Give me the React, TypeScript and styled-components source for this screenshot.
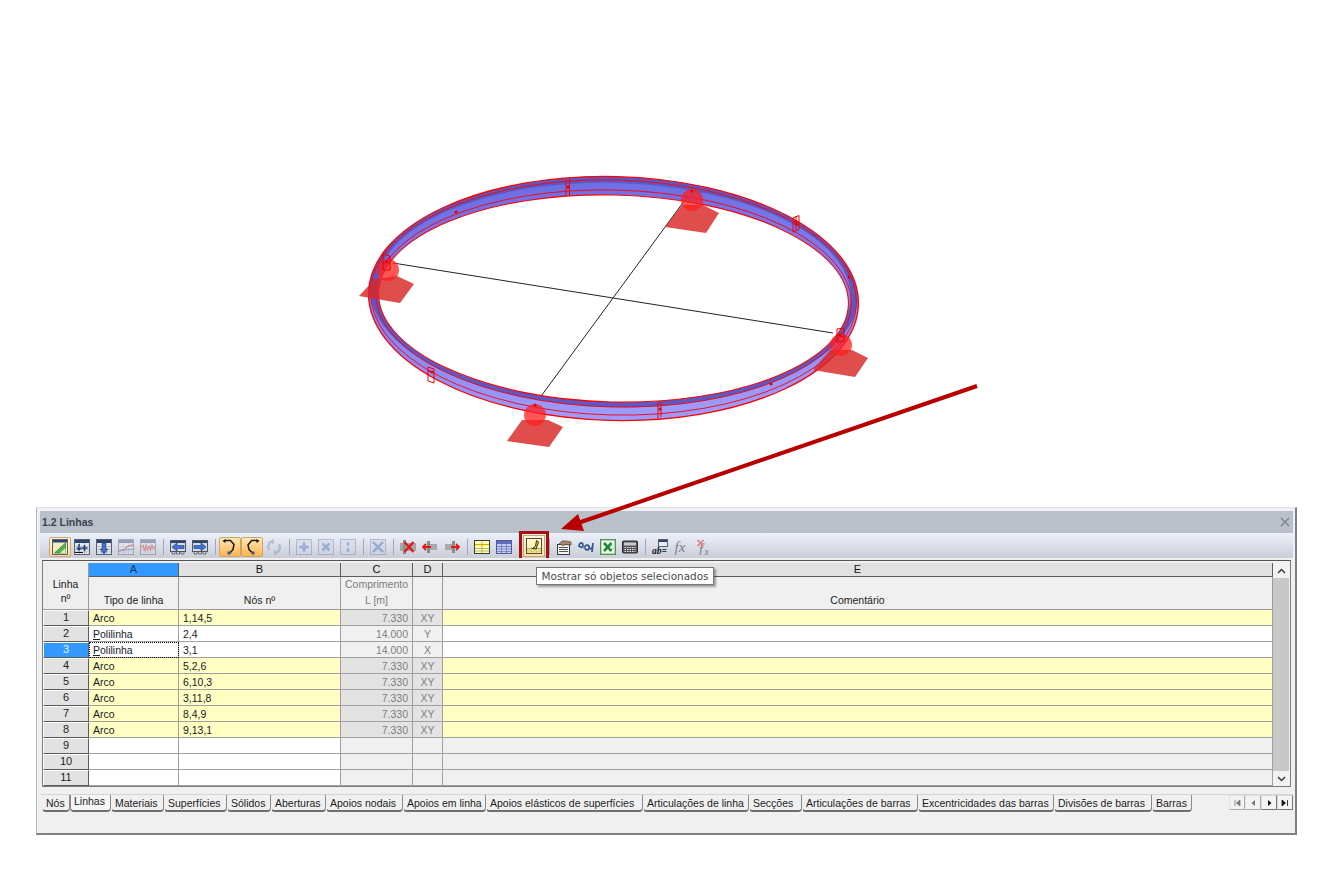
import React from 'react';
import styled, { createGlobalStyle } from 'styled-components';

const GlobalStyle = createGlobalStyle`
  html, body {
    margin: 0;
    padding: 0;
    background: #fff;
  }
  body {
    font-family: "Liberation Sans", Arial, sans-serif;
    font-size: 10.5px;
    color: #1a1a1a;
  }
`;

const Page = styled.div`
  position: relative;
  width: 1343px;
  height: 883px;
  overflow: hidden;
`;

const Scene = styled.svg`
  display: block;
  width: 1343px;
  height: 507px;
`;

const Overlay = styled.svg`
  position: absolute;
  left: 0;
  top: 0;
  width: 1343px;
  height: 883px;
  pointer-events: none;
`;

const Tip = styled.div`
  position: absolute;
  left: 536px;
  top: 567px;
  width: 178px;
  height: 18px;
  box-sizing: border-box;
  border: 1px solid #767676;
  background: #fff;
  box-shadow: 2px 2px 2px rgba(0, 0, 0, 0.35);
  font-family: "DejaVu Sans", sans-serif;
  font-size: 10.4px;
  line-height: 16px;
  text-align: center;
  color: #4a4a4a;
  white-space: nowrap;
`;

const Window = styled.div`
  box-sizing: border-box;
  width: 1261px;
  height: 328px;
  margin-left: 36px;
  padding: 3px 2px 0 3px;
  background: #eef0f3;
  border-top: 1px solid #e2e2e2;
  border-left: 1px solid #b4b8bc;
  border-right: 2px solid #7d8186;
  border-bottom: 2px solid #7d8186;
  display: flex;
  flex-direction: column;
`;

const TitleBar = styled.div`
  height: 22px;
  flex: none;
  padding: 0 3px 0 2px;
  background: #b9c0ca;
  display: flex;
  align-items: center;
  justify-content: space-between;
  font-weight: bold;
  font-size: 10.5px;
  color: #3d434d;
`;

const Toolbar = styled.div`
  height: 25px;
  flex: none;
  box-sizing: border-box;
  padding: 0 0 1px 9px;
  background: linear-gradient(#eef1fa, #c9cdd8);
  display: flex;
  align-items: flex-end;
`;

const ToolButton = styled.div<{ $state?: 'on' | 'soft'; $off?: boolean; $marked?: boolean }>`
  width: 22px;
  height: ${(p) => (p.$marked ? '22px' : '20px')};
  box-sizing: border-box;
  display: flex;
  align-items: center;
  justify-content: center;
  border-radius: ${(p) => (p.$marked ? '0' : '2px')};
  border: 1px solid ${(p) => (p.$state ? '#c9a66c' : 'transparent')};
  background: ${(p) =>
    p.$state === 'on'
      ? 'linear-gradient(#ffe9b4, #ffb44a)'
      : p.$state === 'soft'
        ? 'linear-gradient(#fff6dc, #ffdc98)'
        : 'transparent'};
  outline: ${(p) => (p.$marked ? '3px solid #a80c0c' : 'none')};
  outline-offset: 1px;
  svg {
    display: block;
    opacity: ${(p) => (p.$off ? 0.42 : 1)};
  }
`;

const ToolGap = styled.div`
  width: 8px;
  height: 20px;
  display: flex;
  justify-content: center;
  &::before {
    content: '';
    width: 1px;
    margin: 2px 0;
    background: #a4a8b2;
  }
`;

const Body = styled.div`
  flex: 1;
  display: flex;
  flex-direction: column;
  background: #f0f0f0;
  padding: 2px 2px 0;
  min-height: 0;
`;

const Frame = styled.div`
  display: flex;
  flex: none;
  width: 1249px;
  box-sizing: border-box;
  padding-top: 2px;
  border: 1px solid #7c7c7c;
  border-top-color: #555;
  background: #f0f0f0;
`;

const Grid = styled.div`
  width: 1230px;
  display: grid;
  grid-template-columns: 46px 90px 162px 72px 30px 830px;
  grid-template-rows: 14px 33px repeat(11, 16px);
`;

const Corner = styled.div`
  grid-row: 1 / span 2;
  box-sizing: border-box;
  border-right: 1px solid #9a9a9a;
  border-bottom: 1px solid #9a9a9a;
  display: flex;
  flex-direction: column;
  align-items: center;
  padding-top: 14px;
  line-height: 14px;
  background: #eeeeee;
`;

const ColumnLetter = styled.div<{ $picked?: boolean }>`
  box-sizing: border-box;
  background: ${(p) => (p.$picked ? '#3399ff' : '#e1e1e1')};
  color: ${(p) => (p.$picked ? '#14365c' : '#111')};
  border-right: 1px solid #5c5c5c;
  border-bottom: 1px solid #5c5c5c;
  text-align: center;
  line-height: 13px;
  font-size: 11px;
`;

const ColumnHead = styled.div<{ $muted?: boolean }>`
  box-sizing: border-box;
  border-right: 1px solid #9a9a9a;
  border-bottom: 1px solid #9a9a9a;
  background: #f0f0f0;
  color: ${(p) => (p.$muted ? '#7c7c7c' : '#222')};
  display: flex;
  flex-direction: column;
  align-items: center;
  justify-content: flex-end;
  line-height: 16px;
  padding-bottom: 1px;
`;

const RowNumber = styled.div<{ $picked?: boolean }>`
  box-sizing: border-box;
  background: ${(p) => (p.$picked ? '#3399ff' : '#e2e2e2')};
  color: ${(p) => (p.$picked ? '#e8f2ff' : '#222')};
  border-top: 1px solid #fbfbfb;
  border-left: 1px solid #fbfbfb;
  border-right: 1px solid #5c5c5c;
  border-bottom: 1px solid #5c5c5c;
  text-align: center;
  line-height: 13px;
  font-size: 11px;
`;

type Tone = 'yellow' | 'white' | 'shade' | 'lock';

const toneColors: Record<Tone, string> = {
  yellow: '#ffffc4',
  white: '#ffffff',
  shade: '#e3e3e3',
  lock: '#f0f0f0',
};

const Cell = styled.div<{ $tone: Tone; $align?: string; $focus?: boolean }>`
  position: relative;
  box-sizing: border-box;
  background: ${(p) => toneColors[p.$tone]};
  color: ${(p) => (p.$tone === 'shade' || p.$tone === 'lock' ? '#7e7e7e' : '#1a1a2e')};
  border-right: 1px solid #a0a0a0;
  border-bottom: 1px solid #a0a0a0;
  text-align: ${(p) => p.$align || 'left'};
  padding: 0 ${(p) => (p.$align === 'right' ? '4px' : p.$align === 'center' ? '0' : '4px')};
  line-height: 16px;
  white-space: nowrap;
  outline: ${(p) => (p.$focus ? '1px dotted #111' : 'none')};
  outline-offset: -1px;
`;

const ScrollTrack = styled.div`
  width: 18px;
  box-sizing: border-box;
  padding-right: 1px;
  display: flex;
  flex-direction: column;
  background: #f0f0f0;
`;

const ScrollEnd = styled.div`
  height: 15px;
  flex: none;
  display: flex;
  align-items: center;
  justify-content: center;
  background: #f2f2f2;
`;

const ScrollThumb = styled.div`
  flex: 1;
  background: #c8c8c8;
`;

const TabRow = styled.div`
  margin-top: 7px;
  height: 18px;
  flex: none;
  display: flex;
  align-items: stretch;
  margin-left: -1px;
  margin-right: -2px;
  padding-left: 1px;
  border-top: 1px solid #d4d4d4;
  box-sizing: border-box;
`;

const Tab = styled.div<{ $w: number; $active?: boolean }>`
  width: ${(p) => p.$w}px;
  box-sizing: border-box;
  padding-left: 3px;
  text-align: left;
  white-space: nowrap;
  line-height: ${(p) => (p.$active ? '13px' : '16px')};
  color: #1c1c1c;
  background: ${(p) => (p.$active ? '#f6f6f6' : '#f0f0f0')};
  border-left: 1px solid ${(p) => (p.$active ? '#8a8a8a' : 'transparent')};
  border-right: 1px solid #8a8a8a;
  border-bottom: 2px solid #6e6e6e;
  border-radius: 0 0 4px 4px;
`;

const TabNav = styled.div`
  margin-left: auto;
  display: flex;
  align-items: flex-start;
`;

const NavButton = styled.div<{ $off?: boolean }>`
  width: 16px;
  height: 15px;
  display: flex;
  align-items: center;
  justify-content: center;
  background: #f4f4f4;
  border: 1px solid #d8d8d8;
  border-right-color: #777;
  border-bottom-color: #777;
  opacity: ${(p) => (p.$off ? 0.55 : 1)};
  box-sizing: border-box;
`;

const StatusBar = styled.div`
  flex: 1;
`;

const Italic = styled.text`
  font-family: "Liberation Serif", serif;
  font-style: italic;
`;

/* ring helpers */
const ellipsePath = (cx: number, cy: number, rx: number, ry: number) =>
  `M${cx - rx} ${cy}A${rx} ${ry} 0 1 0 ${cx + rx} ${cy}A${rx} ${ry} 0 1 0 ${cx - rx} ${cy}Z`;

const TILT = 'rotate(1.4 613.5 298.5)';

const supports = [
  { sphere: [388, 270], base: '359,296 400,303 414,284 397,276 375,279' },
  { sphere: [692, 200], base: '665,227 706,233 719,213 703,205 682,205' },
  { sphere: [841, 345], base: '813,370 855,377 868,358 852,350 830,350' },
  { sphere: [535, 415], base: '507,441 549,447 563,427 548,420 522,420' },
];

const sectionMarks = [
  'M566 180v16M569.5 179v16',
  'M793 218l6-2.500v14l-6 2.500zM793 222h6M796 216v14',
  'M428 367l6 2v14l-6-2zM428 371l6 2',
  'M658 402v16M661 402v15',
  'M383 254l7 2v14h-7zM383 264l7-8',
  'M837 329l7-1v13l-7 1zM837 335l7 2',
];

const sectionDots = [
  [456, 212], [568, 187], [796, 224], [849, 277], [771, 384], [660, 409], [432, 372], [535, 405], [387, 262], [692, 191], [840, 335],
];

const Ring = () => (
  <Scene viewBox="0 0 1343 507">
    <defs>
      <linearGradient id="ringFace" x1="0" y1="0" x2="0.2" y2="1">
        <stop offset="0" stopColor="#6a6ae2" />
        <stop offset="0.55" stopColor="#7f7ff0" />
        <stop offset="1" stopColor="#9c9cff" />
      </linearGradient>
      <mask id="ringMask">
        <path d={ellipsePath(613.5, 298.5, 245, 122) + ellipsePath(613.5, 298.5, 235, 103.500)} fill="#fff" fillRule="evenodd" />
      </mask>
    </defs>
    <line x1="393" y1="263" x2="833" y2="333" stroke="#222" strokeWidth="1" />
    <line x1="539" y1="399" x2="690" y2="193" stroke="#222" strokeWidth="1" />
    <g transform={TILT}>
      <g mask="url(#ringMask)">
        <rect x="360" y="170" width="510" height="260" fill="url(#ringFace)" />
        <path d={ellipsePath(613.5, 292, 244, 115) + ellipsePath(613.5, 292, 237, 109)} fill="#5a5ac6" fillRule="evenodd" />
      </g>
      <g fill="none" stroke="#ff0000" strokeWidth="0.9">
        <ellipse cx="613.5" cy="298.5" rx="245" ry="122" strokeWidth="1.300" />
        <ellipse cx="613.5" cy="298.5" rx="235" ry="103.500" strokeWidth="1.100" />
        <ellipse cx="613.5" cy="297.5" rx="243" ry="117.500" />
        <ellipse cx="613.5" cy="298.5" rx="238" ry="108.500" />
      </g>
    </g>
    {supports.map((s) => (
      <polygon key={s.base} points={s.base} fill="#d92626" fillOpacity="0.82" />
    ))}
    {supports.map((s) => (
      <circle key={s.base} cx={s.sphere[0]} cy={s.sphere[1]} r="11" fill="#ff1f1f" fillOpacity="0.75" />
    ))}
    <g fill="none" stroke="#f00000" strokeWidth="1">
      {sectionMarks.map((d) => (
        <path key={d} d={d} />
      ))}
    </g>
    {sectionDots.map(([x, y]) => (
      <circle key={`${x}-${y}`} cx={x} cy={y} r="1.500" fill="#e80000" />
    ))}
  </Scene>
);

/* toolbar glyphs */
const Sheet = ({ head = '#2b4470', fill = '#e4e7ee' }: { head?: string; fill?: string }) => (
  <g>
    <rect x="0.5" y="0.5" width="15" height="15" fill={fill} stroke="#59606e" />
    <rect x="1" y="1" width="14" height="3" fill={head} />
    <path d="M1 7.500h14M1 10.500h14M1 13h14M5.500 4V15M10.500 4V15" stroke="#9aa0ac" strokeWidth="0.6" />
  </g>
);

const Ticks = () => (
  <g>
    <rect x="0.5" y="1.500" width="15" height="11" fill="#d6dae2" stroke="#4e5562" />
    <rect x="1" y="2" width="14" height="2" fill="#2b4470" />
    <path d="M2 13v2h3v-2M6.500 13v2h3v-2M11 13v2h3v-2" fill="none" stroke="#4e5562" strokeWidth="0.8" />
  </g>
);

const Squares = ({ mark }: { mark: React.ReactNode }) => (
  <g>
    <rect x="0.5" y="0.5" width="15" height="15" fill="#c9d3e6" stroke="#78809a" />
    <path d="M1 5.500h14M1 10.500h14M5.500 1v14M10.500 1v14" stroke="#e8ecf4" strokeWidth="0.7" />
    {mark}
  </g>
);

const Stub = ({ flip }: { flip?: boolean }) => (
  <g transform={flip ? 'matrix(-1 0 0 1 16 0)' : undefined}>
    <rect x="5" y="5" width="10" height="6" fill="#a9a9a9" />
    <rect x="5" y="2" width="3" height="12" fill="#8a8a8a" />
    <path d="M9 8H1M4 5L1 8l3 3" fill="none" stroke="#e01818" strokeWidth="1.800" />
  </g>
);

const icons: Record<string, React.ReactNode> = {
  wedge: (
    <g>
      <rect x="0.5" y="0.5" width="15" height="15" fill="#f4edc4" stroke="#55606a" />
      <rect x="1" y="1" width="14" height="2.500" fill="#2b4470" />
      <path d="M2.500 14L13.500 4v10z" fill="#5cb04a" stroke="#2c7a2c" strokeWidth="0.7" />
      <path d="M8 14l5.500-5v5z" fill="#d8eecf" />
    </g>
  ),
  addDown: (
    <g>
      <Sheet />
      <path d="M5 5v6M2.800 8.800L5 11l2.200-2.200" fill="none" stroke="#1d3f80" strokeWidth="1.500" />
      <path d="M10.500 6v6M7.500 9h6" stroke="#1d3f80" strokeWidth="1.600" />
      <path d="M1 13.500h8" stroke="#111" strokeWidth="1" />
    </g>
  ),
  down: (
    <g>
      <Sheet />
      <path d="M6.500 4h3v6H12l-4 5-4-5h2.500z" fill="#3f72c8" stroke="#16376e" strokeWidth="0.6" />
    </g>
  ),
  ramp: (
    <g>
      <Sheet />
      <path d="M1 12l6-2 3-3 5-1" fill="none" stroke="#d82020" strokeWidth="1.300" />
      <path d="M1 12l6-1 8-1" fill="none" stroke="#2050b0" strokeWidth="1" />
    </g>
  ),
  wave: (
    <g>
      <Sheet />
      <path d="M1 9l2-3 1.500 6L6 6l1.500 5L9 7l1.500 4L12 6l1.500 4 1.500-2" fill="none" stroke="#d82020" strokeWidth="1.100" />
    </g>
  ),
  left: (
    <g>
      <Ticks />
      <path d="M14 6.500H7V4L2 8l5 4V9.500h7z" fill="#3f72d8" stroke="#16376e" strokeWidth="0.6" />
    </g>
  ),
  right: (
    <g>
      <Ticks />
      <path d="M2 6.500h7V4l5 4-5 4V9.500H2z" fill="#3f72d8" stroke="#16376e" strokeWidth="0.6" />
    </g>
  ),
  undo: (
    <g>
      <path d="M3 1.500h5.500l3.500 4-1 5-3 3.500" fill="none" stroke="#1a1a1a" strokeWidth="1.500" />
      <path d="M3.500 0l-3 2 3 2z" fill="#111" />
      <circle cx="7" cy="14" r="1.800" fill="#2f5fb0" />
    </g>
  ),
  redo: (
    <g>
      <path d="M13 1.500H7.500L4 6l1 4.500 3.500 3.500" fill="none" stroke="#1a1a1a" strokeWidth="1.500" />
      <path d="M12.500 0l3 2-3 2z" fill="#111" />
      <circle cx="9" cy="14" r="1.800" fill="#2f5fb0" />
    </g>
  ),
  cycle: (
    <g fill="none" stroke="#7d8fb0" strokeWidth="2.400">
      <path d="M3 11A6 6 0 0 1 7 2" />
      <path d="M13 5a6 6 0 0 1-4 9" />
      <path d="M7 0v5M9 11v5" strokeWidth="1.500" />
    </g>
  ),
  plus: <Squares mark={<path d="M8 3.500v9M3.500 8h9" stroke="#4a6fc0" strokeWidth="3" />} />,
  star: <Squares mark={<path d="M4.500 4.500l7 7M11.500 4.500l-7 7" stroke="#4a6fc0" strokeWidth="2.800" />} />,
  dots: <Squares mark={<path d="M8 3.500v3M8 9.500v3" stroke="#4a6fc0" strokeWidth="3" />} />,
  cross: <Squares mark={<path d="M3 3l10 10M13 3L3 13" stroke="#3f68b8" strokeWidth="2.600" />} />,
  drop: (
    <g>
      <rect x="0" y="4" width="16" height="8" fill="#a6a6a6" />
      <rect x="3" y="1" width="3" height="14" fill="#8c8c8c" />
      <path d="M4.500 3l9 10M13.500 3l-9 10" stroke="#e01818" strokeWidth="2.200" />
    </g>
  ),
  stubLeft: <Stub />,
  stubRight: <Stub flip />,
  yellowSheet: (
    <g>
      <rect x="0.5" y="1.500" width="15" height="13" fill="#fffdb0" stroke="#3a3a3a" />
      <rect x="1" y="5" width="14" height="1.200" fill="#c8b400" />
      <path d="M1 9.500h14M1 12h14M8 2v12" stroke="#a09a50" strokeWidth="0.7" />
    </g>
  ),
  blueSheet: (
    <g>
      <rect x="0.5" y="1.500" width="15" height="13" fill="#c8ccec" stroke="#50589a" />
      <rect x="1" y="2" width="14" height="3" fill="#5f6cc0" />
      <path d="M1 7.500h14M1 10h14M1 12.500h14M5.500 5v9M10.500 5v9" stroke="#5f6cc0" strokeWidth="0.7" />
    </g>
  ),
  pickSheet: (
    <g>
      <rect x="0.5" y="0.5" width="15" height="15" fill="#fff7c0" stroke="#4c4c4c" />
      <path d="M1 10.500h14M1 13h14M5.500 9v6M10.500 9v6" stroke="#8e8a50" strokeWidth="0.7" />
      <rect x="1" y="11" width="14" height="4" fill="#e6dc70" fillOpacity="0.7" />
      <path d="M10.500 2.500L9.500 8 6.500 10.500l3.500.5L12.500 4z" fill="#f2d000" stroke="#1a1a1a" strokeWidth="0.9" />
    </g>
  ),
  hand: (
    <g>
      <rect x="1.500" y="5.500" width="12" height="10" fill="#f4f4f4" stroke="#3a3a3a" />
      <path d="M3 8.500h9M3 10.500h9M3 12.500h9" stroke="#444" strokeWidth="0.9" />
      <path d="M3 5l3-3h4l5 1v3l-5-.5-3 1z" fill="#a88a70" stroke="#50402f" strokeWidth="0.7" />
    </g>
  ),
  loops: (
    <g fill="none" stroke="#34558c" strokeWidth="1.700">
      <path d="M1 8c0-5 4-5 4-2s-3 3-3 1" />
      <circle cx="9" cy="8.500" r="2.300" />
      <path d="M11 9c2 2 4 0 4-5M15 4l-1 9" />
      <path d="M5 7.500c1 2 2 2 2 2" stroke="#7a8ca8" />
    </g>
  ),
  excel: (
    <g>
      <rect x="0.5" y="0.5" width="15" height="15" fill="#f4faf0" stroke="#2e7d32" />
      <rect x="1" y="1" width="14" height="14" fill="none" stroke="#6fb56f" />
      <path d="M4 4l7.500 8M11.500 4L4 12" stroke="#1f8a3a" strokeWidth="2.600" />
      <path d="M10 7h4M10 9.500h4" stroke="#9acb9a" strokeWidth="0.8" />
    </g>
  ),
  calc: (
    <g>
      <rect x="0.5" y="2" width="15" height="12" rx="1" fill="#555" stroke="#2c2c2c" />
      <rect x="2" y="3.500" width="12" height="3" fill="#c9ccd0" />
      <path d="M2.500 8.500h11M2.500 10.500h11M2.500 12.500h11" stroke="#e6e6e6" strokeWidth="1" strokeDasharray="1.500 1" />
    </g>
  ),
  field: (
    <g>
      <rect x="6.500" y="0.500" width="9" height="7" fill="#e8ecf4" stroke="#5a6070" />
      <rect x="7" y="1" width="8" height="2" fill="#2b4470" />
      <Italic x="0" y="15" fontSize="9.500" fontWeight="bold" fill="#111">ab=</Italic>
    </g>
  ),
  fx: (
    <Italic x="0.500" y="13" fontSize="15" fill="#7b7f88">fx</Italic>
  ),
  fxOff: (
    <g>
      <Italic x="3" y="14.500" fontSize="14" fill="#7b7f88">f</Italic>
      <Italic x="8.500" y="15.500" fontSize="9.500" fill="#7b7f88">x</Italic>
      <path d="M1.500 1l6 6M7.500 1l-6 6" stroke="#d87a84" strokeWidth="1.600" />
    </g>
  ),
};

type Tool = { icon: string; state?: 'on' | 'soft'; off?: boolean; marked?: boolean };

const toolGroups: Tool[][] = [
  [
    { icon: 'wedge', state: 'soft' },
    { icon: 'addDown' },
    { icon: 'down' },
    { icon: 'ramp', off: true },
    { icon: 'wave', off: true },
  ],
  [{ icon: 'left' }, { icon: 'right' }],
  [{ icon: 'undo', state: 'on' }, { icon: 'redo', state: 'on' }, { icon: 'cycle', off: true }],
  [{ icon: 'plus', off: true }, { icon: 'star', off: true }, { icon: 'dots', off: true }],
  [{ icon: 'cross', off: true }],
  [{ icon: 'drop' }, { icon: 'stubLeft' }, { icon: 'stubRight' }],
  [{ icon: 'yellowSheet' }, { icon: 'blueSheet' }],
  [{ icon: 'pickSheet', state: 'soft', marked: true }],
  [{ icon: 'hand' }, { icon: 'loops' }, { icon: 'excel' }, { icon: 'calc' }],
  [{ icon: 'field' }, { icon: 'fx' }, { icon: 'fxOff' }],
];

type Line = { kind: string; nodes: string; length: string; plane: string };

const lines: Line[] = [
  { kind: 'Arco', nodes: '1,14,5', length: '7.330', plane: 'XY' },
  { kind: 'Polilinha', nodes: '2,4', length: '14.000', plane: 'Y' },
  { kind: 'Polilinha', nodes: '3,1', length: '14.000', plane: 'X' },
  { kind: 'Arco', nodes: '5,2,6', length: '7.330', plane: 'XY' },
  { kind: 'Arco', nodes: '6,10,3', length: '7.330', plane: 'XY' },
  { kind: 'Arco', nodes: '3,11,8', length: '7.330', plane: 'XY' },
  { kind: 'Arco', nodes: '8,4,9', length: '7.330', plane: 'XY' },
  { kind: 'Arco', nodes: '9,13,1', length: '7.330', plane: 'XY' },
];

const tabs: [string, number][] = [
  ['Nós', 28],
  ['Linhas', 41],
  ['Materiais', 53],
  ['Superfícies', 63],
  ['Sólidos', 44],
  ['Aberturas', 55],
  ['Apoios nodais', 77],
  ['Apoios em linha', 83],
  ['Apoios elásticos de superfícies', 157],
  ['Articulações de linha', 106],
  ['Secções', 53],
  ['Articulações de barras', 116],
  ['Excentricidades das barras', 136],
  ['Divisões de barras', 98],
  ['Barras', 40],
];

const navGlyphs = ['M2 1v6M7 1L3.500 4 7 7z', 'M6 1L2.500 4 6 7z', 'M3 1l3.500 3L3 7z', 'M1 1l3.500 3L1 7zM6.500 1v6'];

const Chevron = ({ up }: { up?: boolean }) => (
  <svg width="9" height="6" viewBox="0 0 9 6">
    <path d={up ? 'M1 5l3.500-3.500L8 5' : 'M1 1l3.500 3.500L8 1'} fill="none" stroke="#3c3c3c" strokeWidth="1.500" />
  </svg>
);

const kindLabel = (kind: string) =>
  kind === 'Polilinha' ? (
    <>
      <u>P</u>olilinha
    </>
  ) : (
    kind
  );

const App: React.FC = () => (
  <Page>
    <GlobalStyle />
    <Ring />

    <Window>
      <TitleBar>
        1.2 Linhas
        <svg width="10" height="10" viewBox="0 0 10 10">
          <path d="M1 1l8 8M9 1l-8 8" stroke="#7c828c" strokeWidth="1.400" />
        </svg>
      </TitleBar>

      <Toolbar>
        {toolGroups.map((group, i) => (
          <React.Fragment key={i}>
            {i > 0 && <ToolGap />}
            {group.map((tool) => (
              <ToolButton key={tool.icon} $state={tool.state} $off={tool.off} $marked={tool.marked}>
                <svg width="16" height="16" viewBox="0 0 16 16">
                  {icons[tool.icon]}
                </svg>
              </ToolButton>
            ))}
          </React.Fragment>
        ))}
      </Toolbar>

      <Body>
        <Frame>
          <Grid>
            <Corner>
              <span>Linha</span>
              <span>nº</span>
            </Corner>
            <ColumnLetter $picked>A</ColumnLetter>
            <ColumnLetter>B</ColumnLetter>
            <ColumnLetter>C</ColumnLetter>
            <ColumnLetter>D</ColumnLetter>
            <ColumnLetter>E</ColumnLetter>
            <ColumnHead>Tipo de linha</ColumnHead>
            <ColumnHead>Nós nº</ColumnHead>
            <ColumnHead $muted>
              <span>Comprimento</span>
              <span>L [m]</span>
            </ColumnHead>
            <ColumnHead />
            <ColumnHead>Comentário</ColumnHead>

            {Array.from({ length: 11 }, (_, i) => {
              const line = lines[i];
              const arc = line?.kind === 'Arco';
              const base: Tone = arc ? 'yellow' : 'white';
              return (
                <React.Fragment key={i}>
                  <RowNumber $picked={i === 2}>{i + 1}</RowNumber>
                  <Cell $tone={base} $focus={i === 2}>
                    {line && kindLabel(line.kind)}
                  </Cell>
                  <Cell $tone={base}>{line?.nodes}</Cell>
                  <Cell $tone={arc ? 'shade' : 'lock'} $align="right">
                    {line?.length}
                  </Cell>
                  <Cell $tone={arc ? 'shade' : 'lock'} $align="center">
                    {line?.plane}
                  </Cell>
                  <Cell $tone={line ? base : 'lock'} />
                </React.Fragment>
              );
            })}
          </Grid>
          <ScrollTrack>
            <ScrollEnd>
              <Chevron up />
            </ScrollEnd>
            <ScrollThumb />
            <ScrollEnd>
              <Chevron />
            </ScrollEnd>
          </ScrollTrack>
        </Frame>

        <TabRow>
          {tabs.map(([label, width]) => (
            <Tab key={label} $w={width} $active={label === 'Linhas'}>
              {label}
            </Tab>
          ))}
          <TabNav>
            {navGlyphs.map((d, i) => (
              <NavButton key={d} $off={i < 2}>
                <svg width="8" height="8" viewBox="0 0 8 8">
                  <path d={d} fill="#111" stroke="#111" strokeWidth={i === 0 || i === 3 ? 0.8 : 0} />
                </svg>
              </NavButton>
            ))}
          </TabNav>
        </TabRow>
        <StatusBar />
      </Body>
    </Window>

    <Overlay viewBox="0 0 1343 883">
      <path d="M977 386L578 523" stroke="#b80000" strokeWidth="4" fill="none" />
      <path d="M561 529L578 514L584 531Z" fill="#b80000" />
    </Overlay>

    <Tip>Mostrar só objetos selecionados</Tip>
  </Page>
);

export default App;
